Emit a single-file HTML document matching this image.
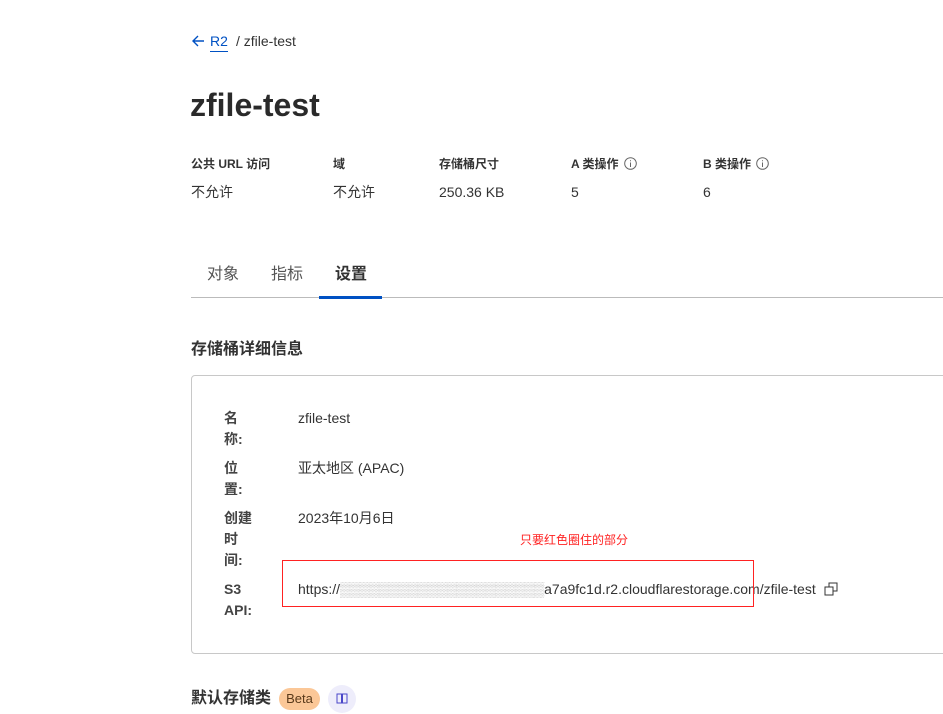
<!DOCTYPE html>
<html><head><meta charset="utf-8"><style>
*{margin:0;padding:0;box-sizing:border-box}
body{width:943px;height:714px;overflow:hidden;background:#fff;font-family:"Liberation Sans","Noto Sans CJK SC",sans-serif;color:#313131;position:relative}
.a{position:absolute;white-space:nowrap;line-height:1}
.lbl{font-size:12px;font-weight:bold;color:#333}
.val{font-size:14px;color:#333}
.k{position:absolute;left:224px;font-size:14px;font-weight:bold;color:#444;width:30px;line-height:21px;white-space:normal;word-break:break-all}
.v{position:absolute;left:298px;font-size:14px;color:#333;line-height:21px;white-space:nowrap}
</style></head><body>
<svg class="a" style="left:191px;top:34px" width="14" height="14" viewBox="0 0 14 14"><path d="M13 7H2M7 2L2 7l5 5" stroke="#0051c3" stroke-width="1.4" fill="none"/></svg>
<div class="a" style="left:210px;top:34px;font-size:14px;color:#0051c3;border-bottom:1px solid #0051c3;padding-bottom:3px">R2</div>
<div class="a" style="left:236px;top:34px;font-size:14px;color:#333">/ zfile-test</div>
<div class="a" style="left:190px;top:89px;font-size:32px;font-weight:bold;color:#2a2a2a">zfile-test</div>
<div class="a lbl" style="left:191px;top:158px">公共 URL 访问</div>
<div class="a lbl" style="left:333px;top:158px">域</div>
<div class="a lbl" style="left:439px;top:158px">存储桶尺寸</div>
<div class="a lbl" style="left:571px;top:158px">A 类操作</div>
<div class="a lbl" style="left:703px;top:158px">B 类操作</div>
<svg class="a" style="left:624px;top:157px" width="13" height="13"><circle cx="6.5" cy="6.5" r="5.8" stroke="#666" fill="none"/><path d="M6.5 5.5v4.5M6.5 3.3v1" stroke="#666"/></svg>
<svg class="a" style="left:756px;top:157px" width="13" height="13"><circle cx="6.5" cy="6.5" r="5.8" stroke="#666" fill="none"/><path d="M6.5 5.5v4.5M6.5 3.3v1" stroke="#666"/></svg>
<div class="a val" style="left:191px;top:185px">不允许</div>
<div class="a val" style="left:333px;top:185px">不允许</div>
<div class="a val" style="left:439px;top:185px">250.36 KB</div>
<div class="a val" style="left:571px;top:185px">5</div>
<div class="a val" style="left:703px;top:185px">6</div>
<div class="a" style="left:207px;top:267px;font-size:16px;color:#555">对象</div>
<div class="a" style="left:271px;top:267px;font-size:16px;color:#555">指标</div>
<div class="a" style="left:335px;top:267px;font-size:16px;color:#333;font-weight:bold">设置</div>
<div class="a" style="left:191px;top:297px;width:752px;height:1px;background:#bbb"></div>
<div class="a" style="left:319px;top:296px;width:63px;height:3px;background:#0051c3"></div>
<div class="a" style="left:191px;top:342px;font-size:16px;font-weight:bold;color:#333">存储桶详细信息</div>
<div class="a" style="left:191px;top:375px;width:770px;height:279px;border:1px solid #c8c8c8;border-radius:4px"></div>
<div class="k" style="top:408px">名称:</div><div class="v" style="top:408px">zfile-test</div>
<div class="k" style="top:458px">位置:</div><div class="v" style="top:458px">亚太地区 (APAC)</div>
<div class="k" style="top:508px">创建时间:</div><div class="v" style="top:508px">2023年10月6日</div>
<div class="k" style="top:579px">S3 API:</div>
<div class="v" style="top:579px">https://<span style="color:#bbb;letter-spacing:-0.2px">▒▒▒▒▒▒▒▒▒▒▒▒▒▒▒▒▒▒▒▒▒</span>a7a9fc1d.r2.cloudflarestorage.com/zfile-test</div>
<svg class="a" style="left:824px;top:582px" width="14" height="14"><rect x="1" y="5" width="8" height="8" stroke="#333" fill="none"/><path d="M5 5V1h8v8H9" stroke="#333" fill="none"/></svg>
<div class="a" style="left:520px;top:534px;font-size:12px;color:#f22">只要红色圈住的部分</div>
<div class="a" style="left:282px;top:560px;width:472px;height:47px;border:1px solid #f22"></div>
<div class="a" style="left:191px;top:691px;font-size:16px;font-weight:bold;color:#333">默认存储类</div>
<div class="a" style="left:279px;top:688px;width:41px;height:22px;border-radius:11px;background:#fbc797;font-size:13px;color:#5a3a1a;text-align:center;line-height:22px">Beta</div>
<div class="a" style="left:328px;top:685px;width:28px;height:28px;border-radius:14px;background:#eeedfb"></div>
<svg class="a" style="left:336px;top:693px" width="12" height="11"><path d="M1 1h4.5v9H1zM6.5 1H11v9H6.5z" stroke="#4a47c8" fill="none"/></svg>
</body></html>
